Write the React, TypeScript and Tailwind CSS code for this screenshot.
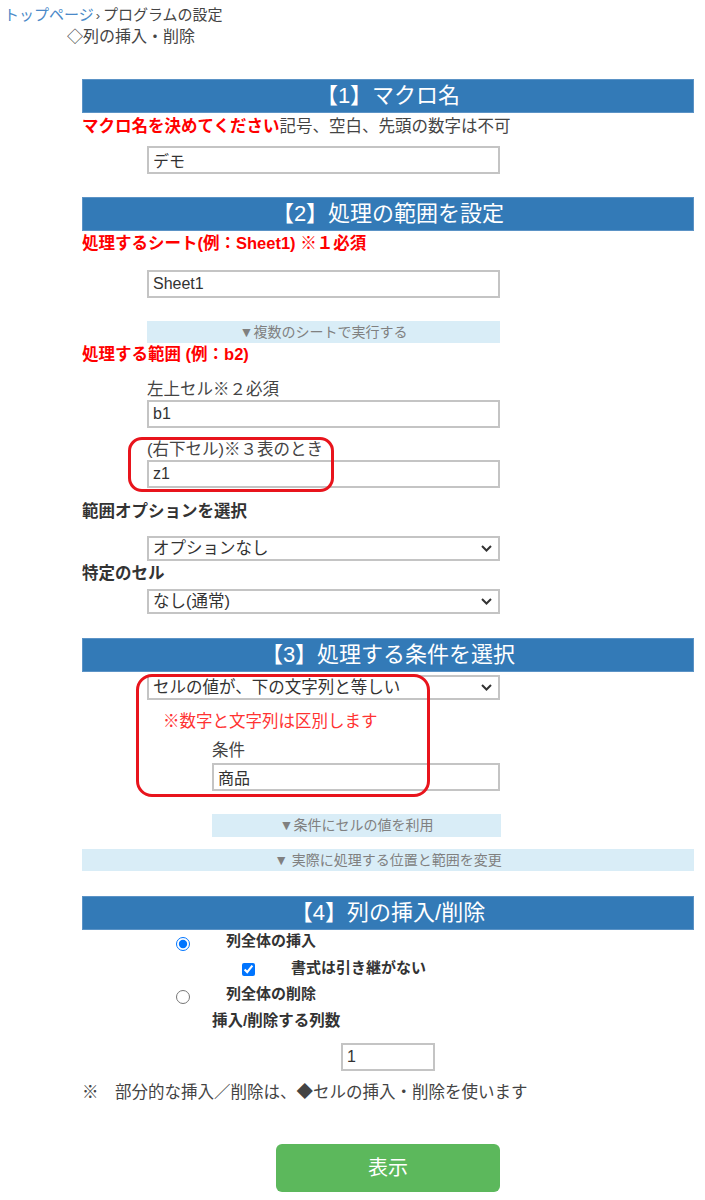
import React from "react";

const FONT = { fontFamily: '"Liberation Sans", "Noto Sans CJK JP", sans-serif' };

function Header({ children, className = "" }: { children: React.ReactNode; className?: string }) {
  return (
    <div
      className={`h-[34px] overflow-hidden bg-[#337ab7] border border-[#5b93c6] text-white text-[22px] leading-[32px] text-center ${className}`}
    >
      {children}
    </div>
  );
}

function TextInput({ value, className = "" }: { value: string; className?: string }) {
  return (
    <input
      readOnly
      value={value}
      className={`block h-[28px] border-2 border-[#c4c4c4] bg-white px-[4px] text-[16px] text-[#333] outline-none ${className}`}
      style={FONT}
    />
  );
}

function Select({ value, className = "" }: { value: string; className?: string }) {
  return (
    <div className={`relative h-[25px] w-[353px] ${className}`}>
      <select
        className="block h-[25px] w-full appearance-none border-2 border-[#c4c4c4] bg-white pl-[4px] text-[16.5px] leading-[21px] text-[#333] outline-none"
        style={FONT}
        defaultValue={value}
      >
        <option>{value}</option>
      </select>
      <svg
        className="pointer-events-none absolute right-[8px] top-[9px]"
        width="11"
        height="7"
        viewBox="0 0 11 7"
      >
        <path d="M1 1 L5.5 5.5 L10 1" fill="none" stroke="#333" strokeWidth="2" />
      </svg>
    </div>
  );
}

function Bar({ children, className = "" }: { children: React.ReactNode; className?: string }) {
  return (
    <div className={`overflow-hidden bg-[#d9edf7] text-[#808080] text-[14px] text-center ${className}`}>{children}</div>
  );
}

const LINE = "h-[22px] overflow-hidden whitespace-nowrap text-[16.5px] leading-[22px]";

export default function App() {
  return (
    <div className="relative w-[705px] bg-white text-[#333]" style={FONT}>
      {/* breadcrumb */}
      <div className="pt-[4px]">
        <div className="h-[22px] overflow-hidden pl-[4px] text-[15px] leading-[22px] whitespace-nowrap">
          <span className="text-[#4a89c8]">トップページ</span>
          <span className="ml-[2px] text-[#555] text-[13px]">›</span>
          <span className="ml-[3px] text-[#444]">プログラムの設定</span>
        </div>
        <div className="h-[22px] overflow-hidden pl-[67px] text-[16px] leading-[22px] text-[#444]">◇列の挿入・削除</div>
      </div>

      <div className="ml-[82px] w-[612px]">
        {/* 1 */}
        <Header className="mt-[31px]">【1】マクロ名</Header>
        <div className={`mt-[2px] ${LINE}`}>
          <span className="font-bold text-[#ff0000]">マクロ名を決めてください</span>
          <span className="text-[#444]">記号、空白、先頭の数字は不可</span>
        </div>
        <TextInput value="デモ" className="mt-[9px] ml-[65px] w-[353px]" />

        {/* 2 */}
        <Header className="mt-[23px]">【2】処理の範囲を設定</Header>
        <div className={`mt-[1px] ${LINE} font-bold text-[#ff0000]`}>
          処理するシート(例：Sheet1) ※１必須
        </div>
        <TextInput value="Sheet1" className="mt-[16px] ml-[65px] w-[353px]" />
        <Bar className="mt-[23px] ml-[65px] w-[353px] h-[22px] leading-[22px]">▼複数のシートで実行する</Bar>
        <div className={`${LINE} font-bold text-[#ff0000]`}>処理する範囲 (例：b2)</div>
        <div className={`mt-[13px] ml-[65px] ${LINE} text-[#444]`}>左上セル※２必須</div>
        <TextInput value="b1" className="ml-[65px] w-[353px]" />
        <div className={`mt-[10px] ml-[65px] ${LINE} text-[#444]`}>(右下セル)※３表のとき</div>
        <TextInput value="z1" className="ml-[65px] w-[353px]" />
        <div className={`mt-[12px] ${LINE} font-bold text-[#333]`}>範囲オプションを選択</div>
        <Select value="オプションなし" className="mt-[14px] ml-[65px]" />
        <div className={`mt-[1px] ${LINE} font-bold text-[#333]`}>特定のセル</div>
        <Select value="なし(通常)" className="mt-[5px] ml-[65px]" />

        {/* 3 */}
        <Header className="mt-[24px]">【3】処理する条件を選択</Header>
        <Select value="セルの値が、下の文字列と等しい" className="mt-[3px] ml-[65px]" />
        <div className={`mt-[10px] ml-[81px] ${LINE} text-[#ff3333]`}>※数字と文字列は区別します</div>
        <div className={`mt-[7px] ml-[130px] ${LINE} text-[#444]`}>条件</div>
        <TextInput value="商品" className="mt-[2px] ml-[130px] w-[288px]" />
        <Bar className="mt-[23px] ml-[130px] w-[289px] h-[23px] leading-[23px]">▼条件にセルの値を利用</Bar>
        <Bar className="mt-[12px] w-[612px] h-[22px] leading-[22px]">▼ 実際に処理する位置と範囲を変更</Bar>

        {/* 4 */}
        <Header className="mt-[25px]">【4】列の挿入/削除</Header>
        <div className="flex h-[22px] items-start text-[15px] leading-[22px] font-bold text-[#333]">
          <input type="radio" name="op" defaultChecked className="mt-[7px] ml-[94px] h-[14px] w-[14px] accent-[#0075ff]" />
          <span className="ml-[36px]">列全体の挿入</span>
        </div>
        <div className="mt-[5px] flex h-[22px] items-start text-[15px] leading-[22px] font-bold text-[#333]">
          <input type="checkbox" defaultChecked className="mt-[6px] ml-[160px] h-[13px] w-[13px] accent-[#0075ff]" />
          <span className="ml-[36px]">書式は引き継がない</span>
        </div>
        <div className="mt-[4px] flex h-[22px] items-start text-[15px] leading-[22px] font-bold text-[#333]">
          <input type="radio" name="op" className="mt-[7px] ml-[94px] h-[14px] w-[14px] accent-[#0075ff]" />
          <span className="ml-[36px]">列全体の削除</span>
        </div>
        <div className="mt-[5px] ml-[130px] h-[22px] text-[15.5px] leading-[22px] font-bold text-[#333]">挿入/削除する列数</div>
        <TextInput value="1" className="mt-[11px] ml-[259px] w-[94px] h-[27px]" />
        <div className={`mt-[10px] ${LINE} text-[#444]`}>
          ※　部分的な挿入／削除は、◆セルの挿入・削除を使います
        </div>

        <div className="mt-[41px] ml-[194px] flex h-[48px] w-[224px] items-center justify-center rounded-[6px] bg-[#5cb85c] text-[20px] text-white">
          表示
        </div>
        <div className="h-[8px]" />
      </div>

      {/* red annotation outlines */}
      <div className="pointer-events-none absolute left-[128px] top-[437px] h-[55px] w-[206px] rounded-[14px] border-[3px] border-[#e8141c]" />
      <div className="pointer-events-none absolute left-[136px] top-[674px] h-[123px] w-[294px] rounded-[16px] border-[3px] border-[#e8141c]" />
    </div>
  );
}
